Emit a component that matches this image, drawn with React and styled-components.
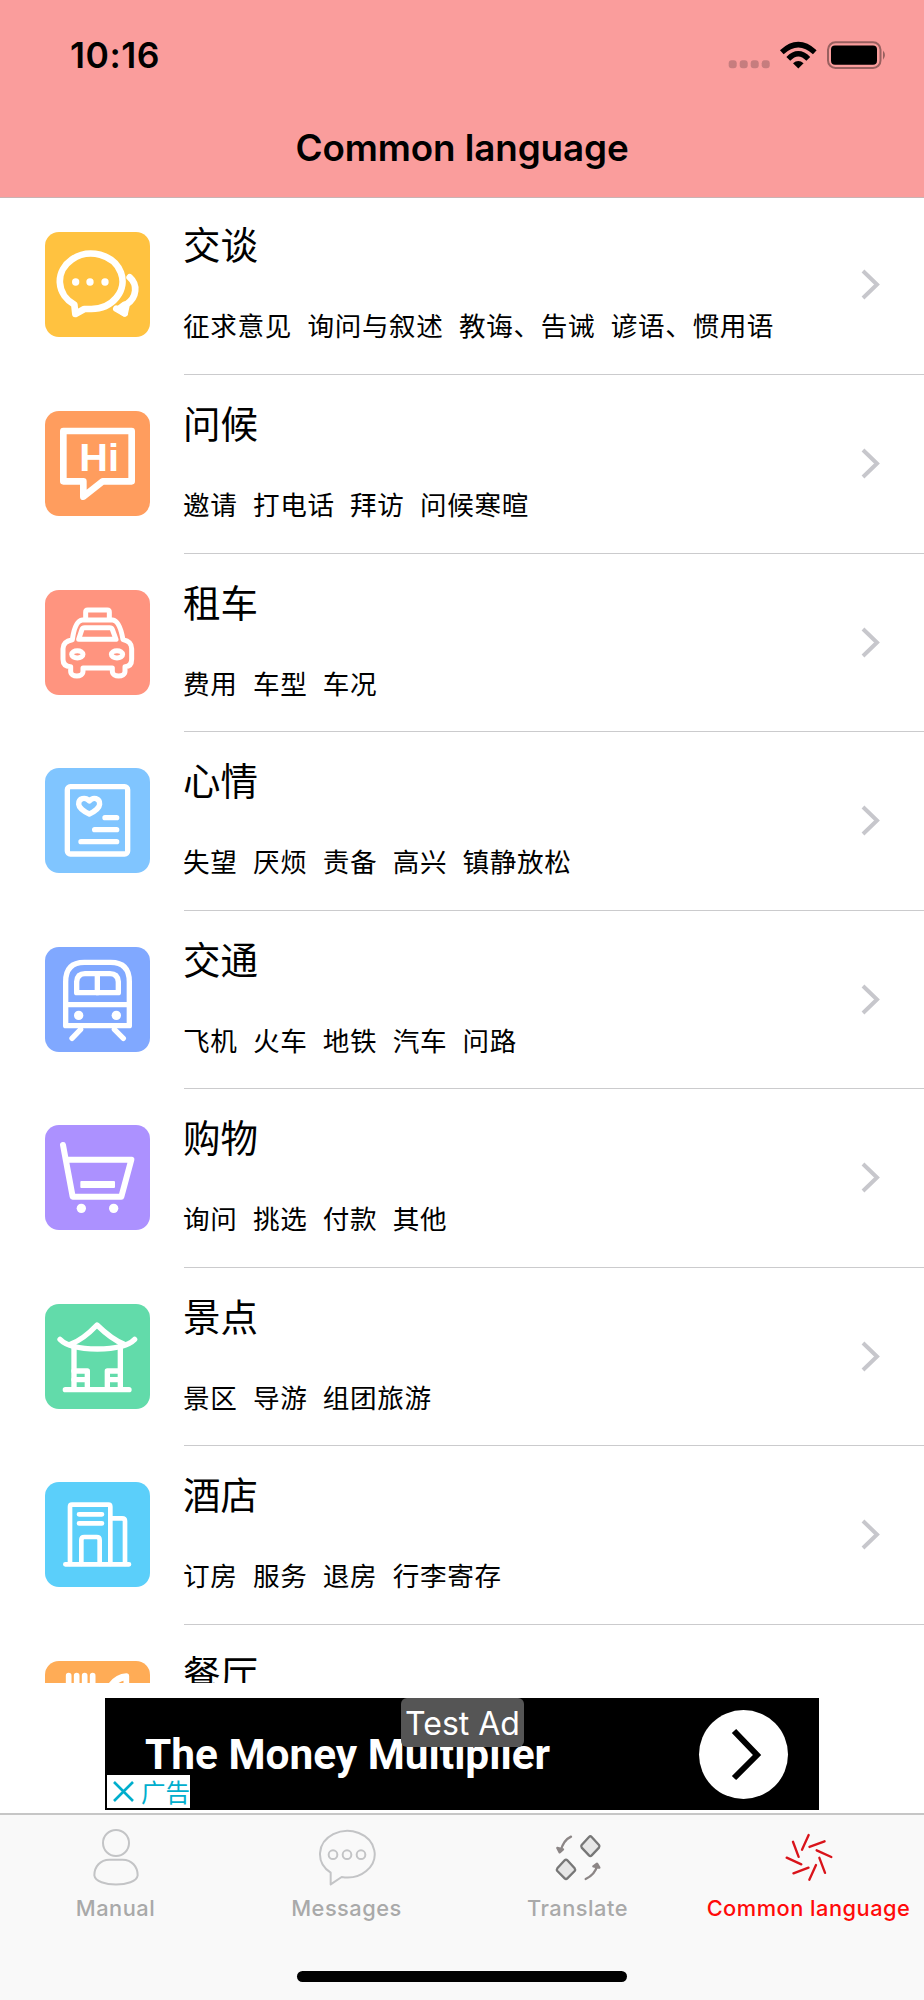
import React from "react";
import styled, { createGlobalStyle } from "styled-components";

const GlobalStyle = createGlobalStyle`
	* {
		box-sizing: border-box;
	}

	body {
		margin: 0;
		background: #fff;
		color: #000;
		font-family: Inter, "Noto Sans CJK SC", sans-serif;
	}

	h1,
	h2,
	p {
		margin: 0;
	}
`;

const ChatIcon = () => (
	<Glyph weight={20}>
		<path d="M137 231 A94 83 0 1 0 88 218 L91 246 L118 231 Z" />
		<path d="M254 136 C279 158 276 196 245 217 L239 244 L214 230" />
		<path d="M239 218 L239 244 L222 231 Z" />
		<g fill="#fff" stroke="none">
			<circle cx="92" cy="150" r="11" />
			<circle cx="135" cy="150" r="11" />
			<circle cx="180" cy="150" r="11" />
		</g>
	</Glyph>
);

const HiIcon = () => (
	<Glyph weight={20}>
		<path d="M260 60 H55 V211 H115 V257 L173 211 H260 Z" />
		<text x="103" y="180">
			Hi
		</text>
	</Glyph>
);

const TaxiIcon = () => (
	<Glyph weight={15}>
		<path d="M122 86 V66 Q122 60 128 60 H187 Q193 60 193 66 V86" />
		<path d="M82 149 Q90 92 112 90 H203 Q224 92 234 149 Q260 154 260 176 V208 Q260 230 240 230 V244 C240 263 202 263 202 244 V234 H114 V244 C114 263 77 263 77 244 V230 Q54 230 54 208 V176 Q54 154 82 149 Z" />
		<path d="M101 148 L111 118 Q113 113 119 113 H194 Q200 113 202 118 L213 148 Z" />
		<ellipse cx="97" cy="193" rx="17" ry="11" />
		<ellipse cx="216" cy="193" rx="17" ry="11" />
	</Glyph>
);

const MoodIcon = () => (
	<Glyph weight={16}>
		<rect x="67" y="56" width="181" height="202" rx="9" />
		<path d="M133 99 C121 86 100 90 101 109 C102 119 117 131 133 138 C149 131 163 119 164 109 C165 90 144 86 133 99 Z" />
		<path d="M180 149 H215 M149 185 H215 M108 221 H215" />
	</Glyph>
);

const TrainIcon = () => (
	<Glyph weight={16}>
		<path d="M62 236 V104 Q62 46 118 46 H197 Q253 46 253 104 V236 Z" />
		<path d="M95 137 V104 Q97 80 120 80 H195 Q218 80 220 104 V137 Z" />
		<path d="M157 80 V137 M62 173 H253 M107 247 L81 274 M208 247 L235 274" />
		<g fill="#fff" stroke="none">
			<circle cx="101" cy="205" r="14" />
			<circle cx="214" cy="205" r="14" />
		</g>
	</Glyph>
);

const CartIcon = () => (
	<Glyph weight={18}>
		<path d="M54 60 L83 215 H229 L259 104 H64" />
		<g fill="#fff" stroke="none">
			<rect x="106" y="168" width="104" height="21" rx="3" />
			<circle cx="109" cy="250" r="14" />
			<circle cx="206" cy="250" r="14" />
		</g>
	</Glyph>
);

const PavilionIcon = () => (
	<Glyph weight={16}>
		<path d="M78 120 Q115 106 156 63 Q200 106 236 120" />
		<path d="M45 106 Q72 134 157 135 Q242 134 269 106" />
		<path d="M87 126 V256 M226 126 V256 M61 257 H252" />
		<path d="M87 201 H127 V256 M87 227 H127 M226 201 H187 V256 M226 227 H187" />
	</Glyph>
);

const HotelIcon = () => (
	<Glyph weight={14}>
		<path d="M75 246 V74 Q75 68 81 68 H190 Q196 68 196 74 V246" />
		<path d="M102 97 H171 M102 124 H171 M61 247 H252" />
		<path d="M109 246 V174 Q109 165 118 165 H155 Q164 165 164 174 V246" />
		<path d="M196 109 H231 Q240 109 240 117 V246" />
	</Glyph>
);

const DiningIcon = () => (
	<Glyph weight={17}>
		<path d="M71 44 V110 M95 44 V110 M119 44 V110 M143 44 V110" />
		<path d="M194 78 Q214 46 244 45 V120" />
		<path d="M201 74 Q216 54 236 50" />
	</Glyph>
);

const PersonIcon = () => (
	<TabGlyph stroke="#c3c4c6">
		<circle cx="93" cy="42" r="39" />
		<path d="M73 92 H113 C140 92 158 113 158 139 C153 176 33 176 28 139 C28 113 46 92 73 92 Z" />
	</TabGlyph>
);

const MessageIcon = () => (
	<TabGlyph stroke="#c3c4c6">
		<path d="M44 166 V131 A82 70 0 1 1 77 144 Z" />
		<circle cx="51" cy="77" r="13" />
		<circle cx="93" cy="77" r="13" />
		<circle cx="135" cy="77" r="13" />
	</TabGlyph>
);

const TranslateIcon = () => (
	<TabGlyph stroke="#777" $weight={7}>
		<path d="M126 24 Q130 20 134 24 L156 48 Q159 52 156 56 L134 79 Q130 83 126 79 L104 56 Q101 52 104 48 Z" fill="#e6e6e6" />
		<path d="M53 94 Q57 90 61 94 L83 118 Q86 122 83 126 L61 148 Q57 152 53 148 L31 126 Q28 122 31 118 Z" fill="#e6e6e6" />
		<g stroke="#8c8686">
			<path d="M72 23 C57 30 46 45 41 66 M31 57 L38 70 L48 61 Z" />
			<path d="M116 150 C135 141 147 126 151 108 M139 112 L150 104 L157 116 Z" />
		</g>
	</TabGlyph>
);

const SpokesIcon = () => (
	<TabGlyph stroke="#d9131a" $weight={7}>
		{[0, 45, 90, 135, 180, 225, 270, 315].map((angle) => (
			<path
				key={angle}
				d="M72 62 L92 18"
				transform={`rotate(${angle} 93 85)`}
			/>
		))}
	</TabGlyph>
);

const categories = [
	{ title: "交谈", topics: "征求意见  询问与叙述  教诲、告诫  谚语、惯用语", color: "#ffc240", icon: <ChatIcon /> },
	{ title: "问候", topics: "邀请  打电话  拜访  问候寒暄", color: "#ff9d5e", icon: <HiIcon /> },
	{ title: "租车", topics: "费用  车型  车况", color: "#ff947f", icon: <TaxiIcon /> },
	{ title: "心情", topics: "失望  厌烦  责备  高兴  镇静放松", color: "#80c5ff", icon: <MoodIcon /> },
	{ title: "交通", topics: "飞机  火车  地铁  汽车  问路", color: "#80a8ff", icon: <TrainIcon /> },
	{ title: "购物", topics: "询问  挑选  付款  其他", color: "#ac91ff", icon: <CartIcon /> },
	{ title: "景点", topics: "景区  导游  组团旅游", color: "#62dbaa", icon: <PavilionIcon /> },
	{ title: "酒店", topics: "订房  服务  退房  行李寄存", color: "#5bcffa", icon: <HotelIcon /> },
	{ title: "餐厅", topics: "", color: "#ffac56", icon: <DiningIcon /> },
];

const tabs = [
	{ label: "Manual", icon: <PersonIcon /> },
	{ label: "Messages", icon: <MessageIcon /> },
	{ label: "Translate", icon: <TranslateIcon /> },
	{ label: "Common language", icon: <SpokesIcon />, active: true },
];

const StatusIcons = () => (
	<svg width="161" height="32" viewBox="0 0 161 32">
		<g fill="#c67d7e">
			<rect x="2.7" y="20.2" width="8" height="8" rx="3" />
			<rect x="13.7" y="20.2" width="8" height="8" rx="3" />
			<rect x="24.7" y="20.2" width="8" height="8" rx="3" />
			<rect x="35.7" y="20.2" width="8" height="8" rx="3" />
		</g>
		<path d="M72.3 28.5 L67 23.3 Q72.3 18.7 77.6 23.3 Z" />
		<g fill="none" stroke="#000" strokeWidth="5.4">
			<path d="M62.3 18.8 Q72.3 8.7 82.3 18.8" />
			<path d="M55.8 12.3 Q72.3 -2.9 88.8 12.3" />
		</g>
		<rect x="102" y="2.3" width="52.5" height="25.7" rx="7.5" fill="none" stroke="#98605f" strokeWidth="2" />
		<rect x="105" y="5.5" width="46" height="19.3" rx="4" />
		<path d="M157 10.5 Q161 15.2 157 19.8 Z" fill="#98605f" />
	</svg>
);

const CategoryRow = ({ title, topics, color, icon }) => {
	return (
		<StyledRow>
			<Tile color={color}>{icon}</Tile>
			<div className="info">
				<div className="text">
					<h2>{title}</h2>
					<p>{topics}</p>
				</div>
				<svg width="20" height="32" viewBox="0 0 20 32">
					<path d="M2 3 L16 16.5 L2 30" fill="none" stroke="#c7c7cc" strokeWidth="4" />
				</svg>
			</div>
		</StyledRow>
	);
};

const App = () => {
	return (
		<Screen>
			<GlobalStyle />
			<Header>
				<StatusBar>
					<time>10:16</time>
					<StatusIcons />
				</StatusBar>
				<h1>Common language</h1>
			</Header>
			<List>
				{categories.map((category) => (
					<CategoryRow key={category.title} {...category} />
				))}
			</List>
			<AdSlot>
				<Ad>
					<p>The Money Multiplier</p>
					<AdButton>
						<svg width="89" height="89" viewBox="0 0 89 89">
							<path d="M35 21 L58 45 L35 68" fill="none" stroke="#000" strokeWidth="6" />
						</svg>
					</AdButton>
					<TestLabel>Test Ad</TestLabel>
					<AdChoice>
						<svg width="21" height="21" viewBox="0 0 21 21">
							<path d="M1 1 L20 20 M20 1 L1 20" stroke="#00aecd" strokeWidth="2.6" />
						</svg>
						广告
					</AdChoice>
				</Ad>
			</AdSlot>
			<TabBar>
				{tabs.map(({ label, icon, active }) => (
					<Tab key={label} $active={active}>
						{icon}
						<span>{label}</span>
					</Tab>
				))}
				<HomeIndicator />
			</TabBar>
		</Screen>
	);
};

const Screen = styled.div`
	display: flex;
	flex-direction: column;
	width: 924px;
	height: 2000px;
	overflow: hidden;
`;

const Header = styled.header`
	height: 198px;
	flex: none;
	background: #fa9d9c;
	border-bottom: 1.5px solid #c9b3b3;
	text-align: center;

	h1 {
		margin-top: 44px;
		font-size: 36.8px;
		font-weight: 600;
		line-height: 48px;
		letter-spacing: -0.1px;
	}
`;

const StatusBar = styled.div`
	display: flex;
	justify-content: space-between;
	align-items: flex-start;
	padding: 40px 37px 0 70px;
	height: 80px;

	time {
		font-size: 35.5px;
		font-weight: 600;
		line-height: 32px;
		letter-spacing: 0.5px;
	}
`;

const List = styled.main`
	height: 1486.4px;
	flex: none;
	overflow: hidden;
	margin-top: -1.6px;
`;

const StyledRow = styled.div`
	display: flex;
	height: 178.57px;
	padding-left: 45px;

	.info {
		display: flex;
		flex: 1;
		justify-content: space-between;
		margin-left: 34px;
		padding-right: 43px;
		border-bottom: 1.5px solid #cbcbcd;
	}

	.text {
		padding-top: 19px;
		margin-left: -1px;
	}

	h2 {
		font-family: "Noto Sans CJK SC", sans-serif;
		font-size: 37.5px;
		font-weight: 400;
		line-height: 56px;
	}

	p {
		margin-top: 34px;
		font-family: "Noto Sans CJK SC", sans-serif;
		font-size: 26.6px;
		line-height: 40px;
		letter-spacing: 0.65px;
		word-spacing: 1.1px;
		white-space: pre;
	}

	.info > svg {
		margin-top: 72px;
	}
`;

const Tile = styled.div`
	width: 105px;
	height: 105px;
	margin-top: 36px;
	flex: none;
	border-radius: 14px;
	background: ${({ color }) => color};
`;

const Glyph = styled.svg.attrs({ viewBox: "0 0 315 315" })`
	display: block;
	width: 100%;
	height: 100%;
	fill: none;
	stroke: #fff;
	stroke-width: ${({ weight }) => weight};
	stroke-linecap: round;
	stroke-linejoin: round;

	text {
		fill: #fff;
		stroke: none;
		font: 700 119px "Liberation Sans", sans-serif;
	}
`;

const AdSlot = styled.div`
	display: flex;
	justify-content: center;
	flex: 1;
	padding-top: 15.4px;
`;

const Ad = styled.div`
	position: relative;
	display: flex;
	justify-content: space-between;
	align-items: center;
	width: 714px;
	height: 112px;
	padding: 0 31px 0 40px;
	background: #000;
	color: #fff;

	p {
		padding-top: 1px;
		font: 700 42.4px / 50px Roboto, sans-serif;
	}
`;

const AdButton = styled.div`
	width: 89px;
	height: 89px;
	border-radius: 50%;
	background: #fff;
`;

const TestLabel = styled.div`
	position: absolute;
	top: 0;
	left: 296px;
	width: 123px;
	height: 49px;
	border-radius: 6px;
	background: #555;
	font-size: 32px;
	font-weight: 400;
	line-height: 52px;
	text-align: center;
`;

const AdChoice = styled.div`
	position: absolute;
	left: 2px;
	bottom: 2px;
	display: flex;
	align-items: center;
	gap: 7px;
	width: 83px;
	height: 33px;
	padding-left: 6px;
	overflow: hidden;
	background: #fff;
	color: #00aecd;
	font: 24.5px / 32px "Noto Sans CJK SC", sans-serif;
	white-space: nowrap;

	svg {
		flex: none;
	}
`;

const TabBar = styled.nav`
	position: relative;
	display: flex;
	height: 187px;
	flex: none;
	background: #f9f9f9;
	border-top: 2px solid #c6c6c6;
`;

const Tab = styled.div`
	display: flex;
	flex: 1;
	flex-direction: column;
	align-items: center;
	padding-top: 14px;
	color: ${({ $active }) => ($active ? "#ff0a0a" : "#a9a9a9")};

	span {
		margin-top: 4px;
		font-size: 21.8px;
		font-weight: 500;
		line-height: 30px;
		letter-spacing: 0.5px;
		white-space: nowrap;
	}
`;

const TabGlyph = styled.svg.attrs({ viewBox: "0 0 186 180" })`
	width: 62px;
	height: 60px;
	fill: none;
	stroke: ${({ stroke }) => stroke};
	stroke-width: ${({ $weight }) => $weight || 6};
	stroke-linecap: round;
	stroke-linejoin: round;
`;

const HomeIndicator = styled.div`
	position: absolute;
	left: 297px;
	bottom: 18px;
	width: 330px;
	height: 11px;
	border-radius: 6px;
	background: #000;
`;

export default App;
